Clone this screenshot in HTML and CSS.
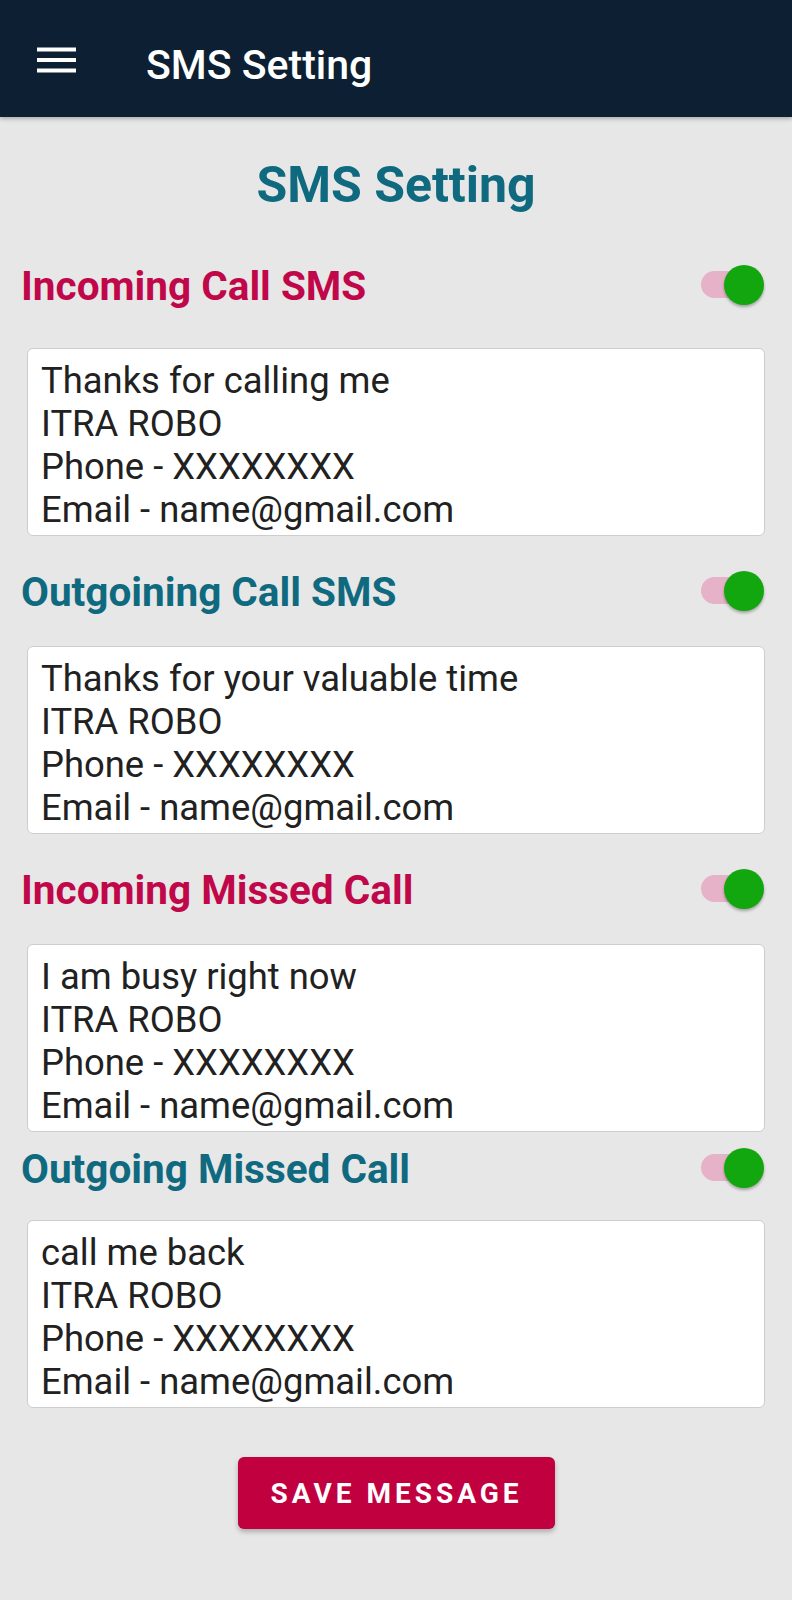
FILE: index.html
```html
<!DOCTYPE html>
<html>
<head>
	<title>SMS Setting</title>
	<link rel="stylesheet" href="styles.css">
</head>
<body>
	<div class="topbar">
		<svg class="menu" width="39" height="26" viewBox="0 0 39 26">
			<rect x="0" y="0.5" width="39" height="4" fill="#fff"/>
			<rect x="0" y="11" width="39" height="4" fill="#fff"/>
			<rect x="0" y="21.5" width="39" height="4" fill="#fff"/>
		</svg>
		<span class="topbar-title">SMS Setting</span>
	</div>

	<div class="page">
		<h1 class="heading">SMS Setting</h1>

		<div class="section first">
			<div class="row">
				<span class="label red">Incoming Call SMS</span>
				<span class="switch"><span class="track"></span><span class="thumb"></span></span>
			</div>
			<div class="msg">Thanks for calling me
ITRA ROBO
Phone - XXXXXXXX
Email - name@gmail.com</div>
		</div>

		<div class="section">
			<div class="row">
				<span class="label teal">Outgoining Call SMS</span>
				<span class="switch"><span class="track"></span><span class="thumb"></span></span>
			</div>
			<div class="msg">Thanks for your valuable time
ITRA ROBO
Phone - XXXXXXXX
Email - name@gmail.com</div>
		</div>

		<div class="section">
			<div class="row">
				<span class="label red">Incoming Missed Call</span>
				<span class="switch"><span class="track"></span><span class="thumb"></span></span>
			</div>
			<div class="msg">I am busy right now
ITRA ROBO
Phone - XXXXXXXX
Email - name@gmail.com</div>
		</div>

		<div class="section tight">
			<div class="row">
				<span class="label teal">Outgoing Missed Call</span>
				<span class="switch"><span class="track"></span><span class="thumb"></span></span>
			</div>
			<div class="msg">call me back
ITRA ROBO
Phone - XXXXXXXX
Email - name@gmail.com</div>
		</div>

		<div class="actions">
			<button class="save" type="button">Save Message</button>
		</div>
	</div>
</body>
</html>
```

FILE: styles.css
```css
body {
  margin: 0;
  background-color: #e7e7e7;
  font-family: Roboto, "Liberation Sans", sans-serif;
  color: #212121;
}

.topbar {
  height: 117px;
  background-color: #0d1f32;
  display: flex;
  align-items: center;
  padding: 0 37px;
  box-sizing: border-box;
  box-shadow: 0 2px 4px rgba(0, 0, 0, 0.25);
}
.menu {
  margin-top: 3px;
}
.topbar-title {
  margin-left: 70px;
  margin-top: 12px;
  color: #fff;
  font-size: 41px;
  font-weight: 500;
  line-height: 48px;
}

.page {
  padding: 0 20px 40px;
}

.heading {
  margin: 40px 0 0;
  text-align: center;
  color: #0f6a7f;
  font-size: 50px;
  font-weight: 700;
  line-height: 56px;
}

.section {
  margin-top: 31px;
}
.section.first {
  margin-top: 48px;
}
.section.tight {
  margin-top: 12px;
}

.row {
  display: flex;
  align-items: center;
  justify-content: space-between;
  height: 50px;
  margin-bottom: 29px;
}
.section.first .row {
  margin-bottom: 37px;
}
.section.tight .row {
  margin-bottom: 26px;
}
.label {
  font-size: 40.5px;
  font-weight: 700;
  line-height: 50px;
  padding-left: 1px;
}
.red {
  color: #c0074a;
}
.teal {
  color: #0f6a7f;
}

.switch {
  position: relative;
  width: 63px;
  height: 40px;
  margin-right: 8px;
  margin-top: -2px;
}
.track {
  position: absolute;
  left: 0;
  top: 6px;
  width: 56px;
  height: 27px;
  border-radius: 14px;
  background-color: #e6b2c7;
}
.thumb {
  position: absolute;
  right: 0;
  top: 0;
  width: 40px;
  height: 40px;
  border-radius: 50%;
  background-color: #12a70f;
  box-shadow: 0 2px 3px rgba(0, 0, 0, 0.3);
}

.msg {
  margin: 0 7px;
  background-color: #fff;
  border: 1px solid #cdcdcd;
  border-radius: 6px;
  padding: 10px 13px 4px;
  font-size: 36.4px;
  line-height: 43px;
  white-space: pre-line;
}

.actions {
  display: flex;
  justify-content: center;
  margin-top: 49px;
}
.save {
  width: 317px;
  height: 72px;
  border: none;
  border-radius: 6px;
  background-color: #c1003f;
  color: #fff;
  font-family: Roboto, "Liberation Sans", sans-serif;
  font-size: 28px;
  font-weight: 700;
  letter-spacing: 4px;
  text-transform: uppercase;
  box-shadow: 0 3px 5px rgba(0, 0, 0, 0.25);
  margin-left: 1px;
}
```
